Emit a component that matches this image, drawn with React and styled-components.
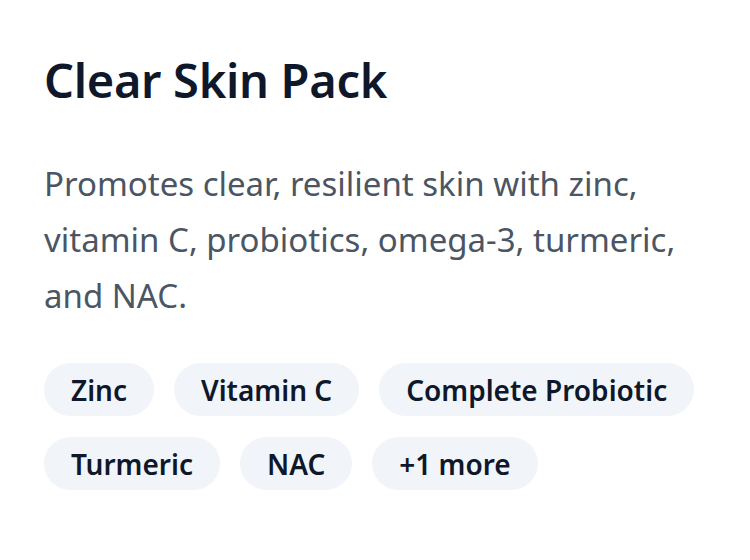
import React from "react";
import styled, { createGlobalStyle } from "styled-components";

const GlobalStyle = createGlobalStyle`
  html, body {
    margin: 0;
    padding: 0;
    background: #ffffff;
  }
  body {
    font-family: "Noto Sans", "Open Sans", sans-serif;
  }
`;

const Card = styled.div`
  width: 750px;
  height: 560px;
  box-sizing: border-box;
  padding: 48px 44px;
  background: #ffffff;
`;

const Title = styled.h1`
  margin: 0;
  font-size: 47px;
  line-height: 64px;
  font-weight: 600;
  color: #0f172a;
  letter-spacing: -0.3px;
`;

const Description = styled.p`
  margin: 44px 0 0;
  font-size: 33px;
  line-height: 56px;
  color: #4b5563;
  max-width: 660px;
`;

const Tags = styled.div`
  display: flex;
  flex-wrap: wrap;
  gap: 21px 20px;
  margin-top: 39px;
`;

const Tag = styled.span`
  display: inline-flex;
  align-items: center;
  height: 53px;
  padding: 0 27px;
  border-radius: 27px;
  background: #f1f5f9;
  color: #0f172a;
  font-size: 28px;
  font-weight: 600;
`;

const tags = ["Zinc", "Vitamin C", "Complete Probiotic", "Turmeric", "NAC", "+1 more"];

export default function App() {
  return (
    <>
      <GlobalStyle />
      <Card>
        <Title>Clear Skin Pack</Title>
        <Description>
          Promotes clear, resilient skin with zinc, vitamin C, probiotics, omega-3, turmeric, and NAC.
        </Description>
        <Tags>
          {tags.map((t) => (
            <Tag key={t}>{t}</Tag>
          ))}
        </Tags>
      </Card>
    </>
  );
}
